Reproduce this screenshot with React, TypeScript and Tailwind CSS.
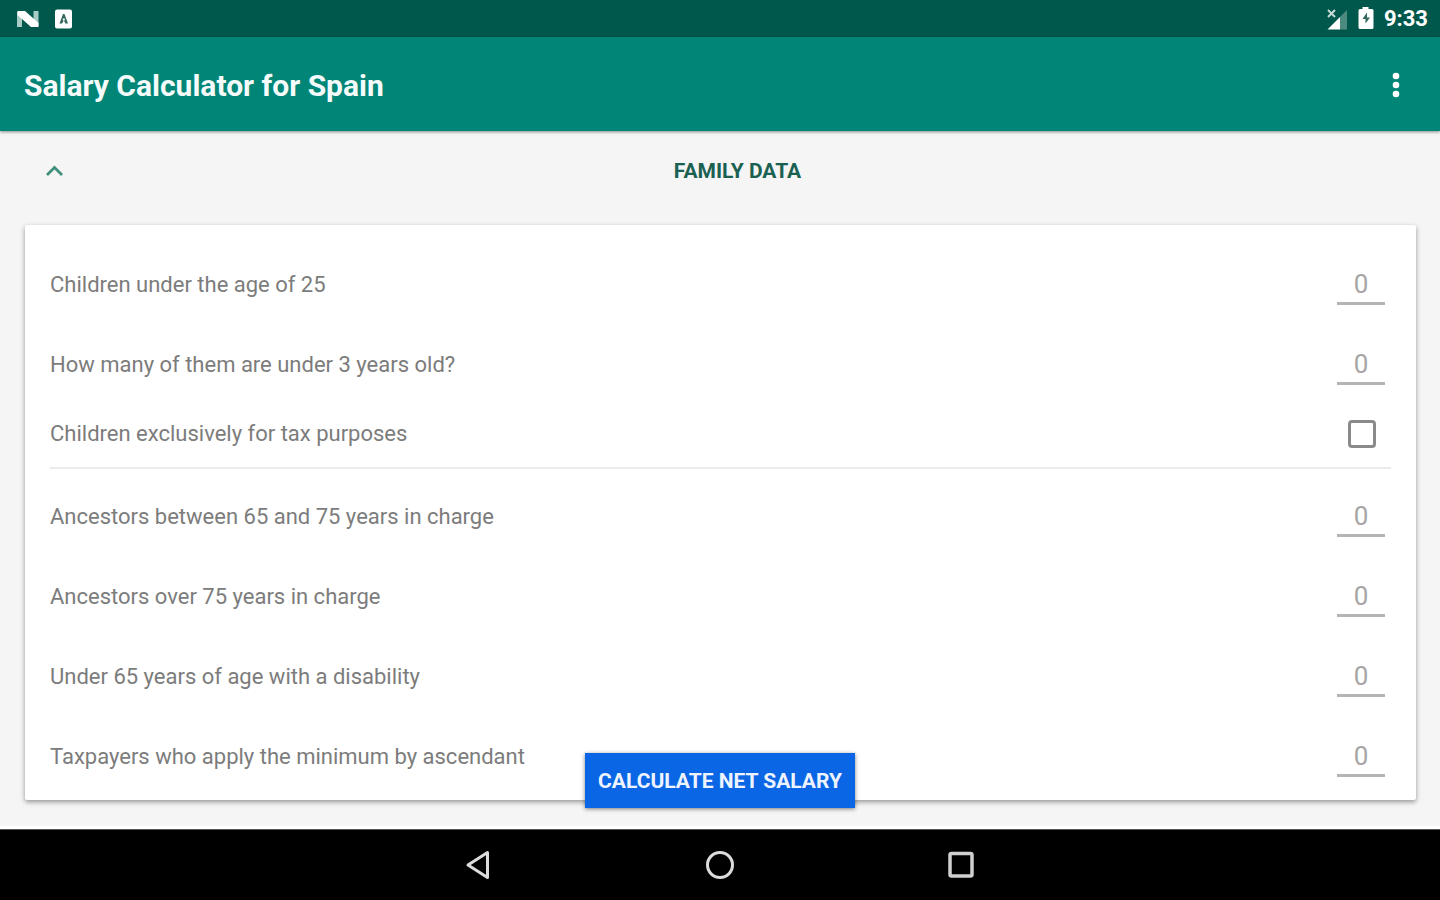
import { useState } from "react";

type NumberField = { id: string; label: string };

const childFields: NumberField[] = [
  { id: "children-25", label: "Children under the age of 25" },
  { id: "children-3", label: "How many of them are under 3 years old?" },
];

const ancestorFields: NumberField[] = [
  { id: "ancestors-65", label: "Ancestors between 65 and 75 years in charge" },
  { id: "ancestors-75", label: "Ancestors over 75 years in charge" },
  { id: "disability", label: "Under 65 years of age with a disability" },
  { id: "taxpayers", label: "Taxpayers who apply the minimum by ascendant" },
];

function NumberRow({ id, label }: NumberField) {
  return (
    <div className="flex h-20 items-center justify-between pr-1.5">
      <label htmlFor={id} className="text-[22px] leading-7 text-[#7c7c7c]">
        {label}
      </label>
      <input
        id={id}
        type="text"
        inputMode="numeric"
        placeholder="0"
        className="h-10 w-12 border-b-[3px] border-[#b4b4b4] bg-transparent text-center text-[26px] leading-8 text-[#7c7c7c] outline-none placeholder:text-[#a6a6a6]"
      />
    </div>
  );
}

function StatusBar() {
  return (
    <div className="flex h-[37px] shrink-0 items-center justify-between bg-[#00574b] pr-3 pl-4 text-white">
      <div className="flex items-center gap-3">
        <svg width="24" height="20" viewBox="0 0 24 20" aria-hidden="true">
          <path d="M1 3h5v15H1z M17.500 2h5v14.500h-5z" fill="#a9cbc5" />
          <path d="M1.500 2H9l13.500 12v4H15L1.500 6z" fill="#fff" />
        </svg>
        <svg width="24" height="22" viewBox="0 0 24 22" aria-hidden="true">
          <rect x="3" y="1.500" width="17" height="19" rx="2" fill="#fff" />
          <path d="M7.500 15.500 11 6h1.500L16 15.500h-2.500l-1.700-3-1.800 3z" fill="#33685f" />
          <path d="M10.800 10.500h2v2h-2z" fill="#fff" />
        </svg>
      </div>
      <div className="flex items-center gap-2">
        <svg width="24" height="22" viewBox="0 0 24 22" aria-hidden="true">
          <path d="M3.500 21.500 16 9v12.500z" fill="#fff" />
          <path d="M16 9l7-7v19.500h-7z" fill="#4d8a80" />
          <path d="M4 2l7 7M11 2 4 9" stroke="#c5dad7" strokeWidth="2" />
        </svg>
        <svg width="20" height="24" viewBox="0 0 20 24" aria-hidden="true">
          <path d="M6.500 0h6v2H16a1.500 1.500 0 0 1 1.500 1.500v17A1.500 1.500 0 0 1 16 22H4a1.500 1.500 0 0 1-1.500-1.500v-17A1.500 1.500 0 0 1 4 2h2.500z" fill="#fff" />
          <path d="M11 5.500 6.500 12h3v4.500L14 10.500h-3z" fill="#33685f" />
        </svg>
        <span className="text-[22px] leading-7 font-bold">9:33</span>
      </div>
    </div>
  );
}

export default function App() {
  const [taxOnly, setTaxOnly] = useState(false);

  return (
    <div className="flex min-h-screen flex-col bg-[#f5f5f5] font-['Roboto',sans-serif]">
      <StatusBar />

      <header className="z-10 flex h-[94px] shrink-0 items-center justify-between bg-[#008577] px-6 pt-[3px] shadow-[0_1px_3px_rgba(0,0,0,0.45)]">
        <h1 className="text-[30px] leading-9 font-bold text-[#f4fbfa]">Salary Calculator for Spain</h1>
        <button type="button" aria-label="More options" className="flex w-10 justify-center">
          <svg width="8" height="28" viewBox="0 0 8 28" fill="#fff" aria-hidden="true">
            <circle cx="4" cy="4" r="3.300" />
            <circle cx="4" cy="13" r="3.300" />
            <circle cx="4" cy="22" r="3.300" />
          </svg>
        </button>
      </header>

      <main className="relative flex flex-1 flex-col border-b-[3px] border-white pr-6 pb-[26px] pl-[25px]">
        <div className="flex h-[79px] items-center px-[13px]">
          <button type="button" aria-label="Collapse family data" className="flex w-[34px] justify-center">
            <svg width="20" height="14" viewBox="0 0 20 14" fill="none" aria-hidden="true">
              <path d="M2 11 9.500 3.500 17 11" stroke="#3f8f7d" strokeWidth="2.800" />
            </svg>
          </button>
          <h2 className="flex-1 text-center text-[21px] leading-7 font-bold text-[#1a6152]">FAMILY DATA</h2>
        </div>

        <section className="mt-[15px] flex-1 rounded-xs bg-white px-[25px] pt-5 shadow-[0_2px_5px_rgba(0,0,0,0.4)]">
          {childFields.map((field) => (
            <NumberRow key={field.id} {...field} />
          ))}
          <div className="mb-2 flex h-16 items-center justify-between border-b-2 border-[#ebebeb] pr-[15px] pb-1">
            <label htmlFor="tax-only" className="text-[22px] leading-7 text-[#7c7c7c]">
              Children exclusively for tax purposes
            </label>
            <input
              id="tax-only"
              type="checkbox"
              checked={taxOnly}
              onChange={(event) => setTaxOnly(event.target.checked)}
              className="size-7 appearance-none rounded-sm border-3 border-[#8a8a8a] checked:bg-[#008577]"
            />
          </div>
          {ancestorFields.map((field) => (
            <NumberRow key={field.id} {...field} />
          ))}
        </section>

        <button
          type="button"
          className="absolute bottom-[18px] left-1/2 h-[55px] w-[270px] -translate-x-1/2 bg-[#0a66e4] text-[21px] leading-7 font-bold whitespace-nowrap text-[#eef4ff] shadow-[0_1px_4px_rgba(0,0,0,0.5)]"
        >
          CALCULATE NET SALARY
        </button>
      </main>

      <nav className="flex h-[71px] shrink-0 items-center justify-center gap-[201px] border-t border-[#555] bg-black">
        <button type="button" aria-label="Back">
          <svg width="40" height="36" viewBox="0 0 40 36" fill="none" aria-hidden="true">
            <path d="M9 18 28.500 5.500v25z" stroke="#dcdcdc" strokeWidth="3" strokeLinejoin="round" />
          </svg>
        </button>
        <button type="button" aria-label="Home">
          <svg width="40" height="36" viewBox="0 0 40 36" fill="none" aria-hidden="true">
            <circle cx="20" cy="18" r="12.500" stroke="#dcdcdc" strokeWidth="3" />
          </svg>
        </button>
        <button type="button" aria-label="Recent apps">
          <svg width="40" height="36" viewBox="0 0 40 36" fill="none" aria-hidden="true">
            <rect x="9" y="6.500" width="22" height="22.500" rx="1.500" stroke="#cfcfcf" strokeWidth="3.500" />
          </svg>
        </button>
      </nav>
    </div>
  );
}
